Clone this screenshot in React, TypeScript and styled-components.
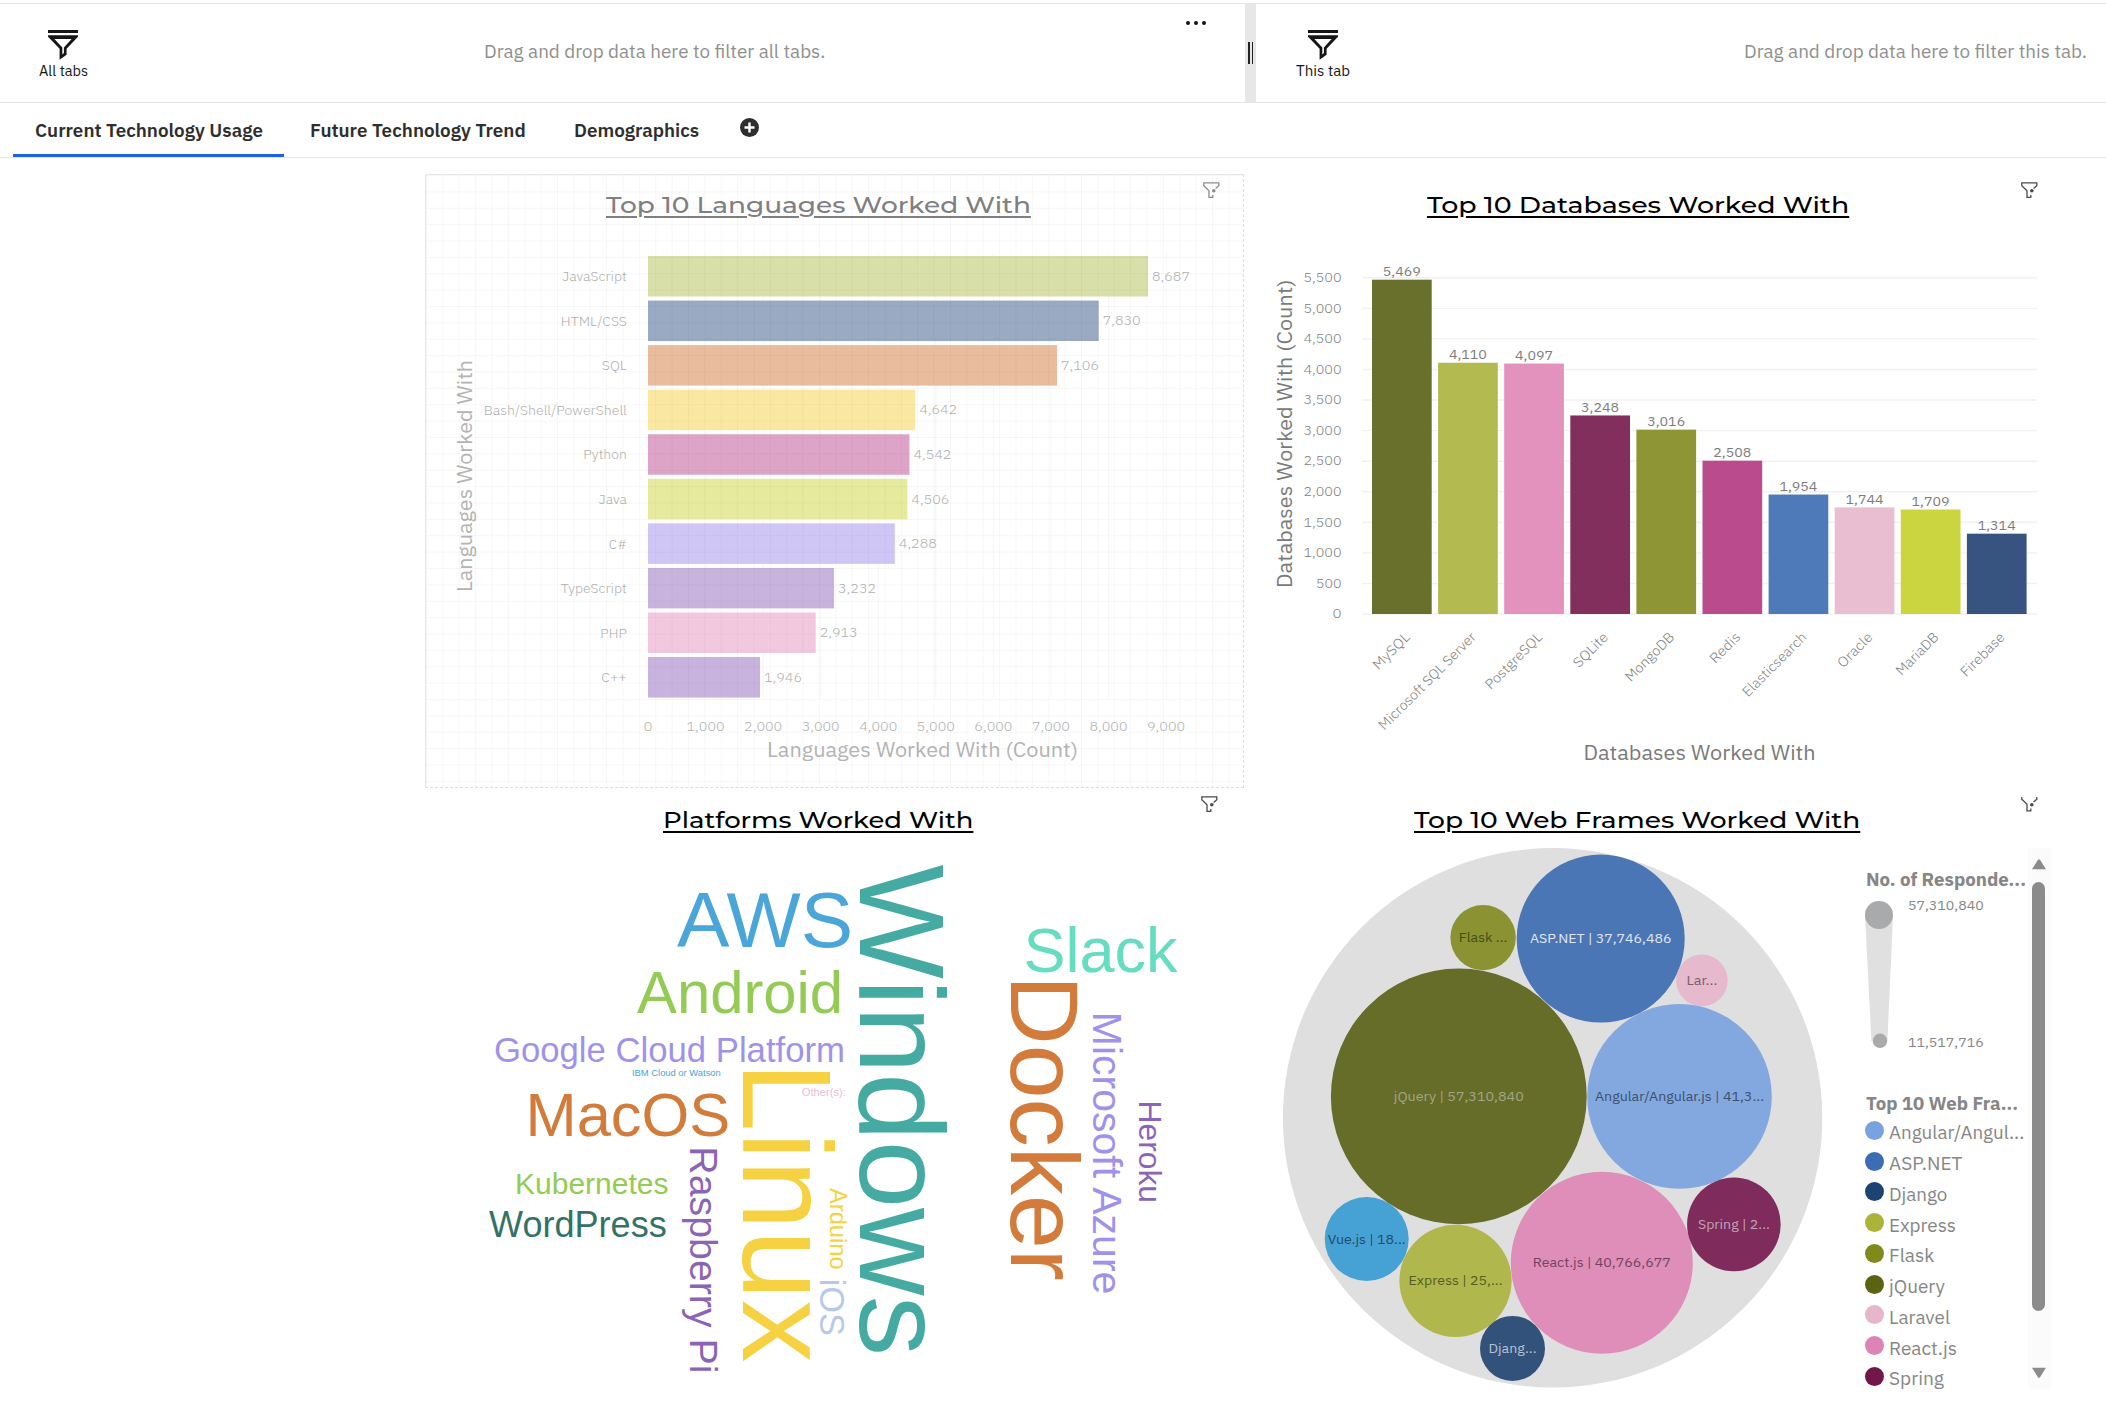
import React, { useLayoutEffect, useRef, useState } from 'react';
import styled, { createGlobalStyle } from 'styled-components';

const UI_FONT = '"IBM Plex Sans", "Open Sans", "Noto Sans", sans-serif';
const TITLE_FONT = 'Montserrat, Lato, "Open Sans", sans-serif';
const CLOUD_FONT = '"Liberation Sans", Arial, sans-serif';

const GlobalStyle = createGlobalStyle`
  *, *::before, *::after { box-sizing: border-box; }
  body { margin: 0; background: #fff; font-family: ${UI_FONT}; }
`;

/* ---------- Text that is scaled to a fixed measure ---------- */

const FitBox = styled.span<{ $w: number }>`
  display: inline-block;
  width: ${(p) => p.$w}px;
  white-space: nowrap;
  text-align: left;
`;

const FitInner = styled.span`
  display: inline-block;
  transform-origin: left center;
`;

function FitText({ width, children }: { width: number; children: string }) {
  const ref = useRef<HTMLSpanElement>(null);
  const [scale, setScale] = useState(1);
  useLayoutEffect(() => {
    if (ref.current) setScale(width / ref.current.offsetWidth);
  }, [width, children]);
  return (
    <FitBox $w={width}>
      <FitInner ref={ref} style={{ transform: `scaleX(${scale})` }}>{children}</FitInner>
    </FitBox>
  );
}

/* ---------- Page frame ---------- */

const Page = styled.div`
  display: flex;
  flex-direction: column;
  width: 2106px;
  height: 1416px;
  padding-top: 3px;
  overflow: hidden;
  background: #fff;
`;

const FilterBar = styled.div`
  display: flex;
  height: 100px;
  border-top: 1px solid #e4e4e4;
  border-bottom: 1px solid #e4e4e4;
`;

const FilterArea = styled.div<{ $w: number; $pad: number }>`
  display: flex;
  flex: none;
  width: ${(p) => p.$w}px;
  padding-left: ${(p) => p.$pad}px;
`;

const FilterScope = styled.div<{ $w: number }>`
  display: flex;
  flex-direction: column;
  align-items: center;
  width: ${(p) => p.$w}px;
  padding-top: 26px;
  color: #161616;
  font-size: 14px;
  line-height: 18px;
  svg { display: block; margin-bottom: 2px; }
`;

const DropHint = styled.div<{ $gap: number }>`
  margin-left: ${(p) => p.$gap}px;
  padding-top: 35px;
  color: #8f8f8f;
  font-size: 18.5px;
  line-height: 24px;
`;

const MoreButton = styled.div`
  display: flex;
  gap: 4px;
  margin: 17px 39px 0 auto;
  i { width: 4px; height: 4px; border-radius: 50%; background: #161616; }
`;

const Splitter = styled.div`
  display: flex;
  align-items: center;
  gap: 2px;
  flex: none;
  width: 11px;
  padding-left: 3px;
  background: #e7e7e7;
  i { width: 1.5px; height: 22px; background: #222; }
`;

const TabBar = styled.div`
  display: flex;
  height: 55px;
  padding-left: 13px;
  border-bottom: 1px solid #e4e4e4;
`;

const Tab = styled.div<{ $active?: boolean }>`
  height: 54px;
  padding: 15px 21.5px 0 21.5px;
  border-bottom: 3px solid ${(p) => (p.$active ? '#1f62e0' : 'transparent')};
  color: #2e2e2e;
  font-size: 18.5px;
  font-weight: 600;
  line-height: 24px;
  & + & { padding-left: 26px; }
`;

const AddTab = styled.div`
  padding: 15px 0 0 20px;
  svg { display: block; }
`;

const Canvas = styled.main`
  display: grid;
  grid-template-columns: 819px 819px;
  grid-template-rows: 614px 614px;
  padding: 16px 0 0 425px;
`;

/* ---------- Widgets ---------- */

const Widget = styled.section<{ $selected?: boolean }>`
  position: relative;
  display: flex;
  flex-direction: column;
  min-width: 0;
  ${(p) =>
    p.$selected &&
    `&::after {
      content: '';
      position: absolute;
      inset: 0;
      border: 1px solid #e6e6e6;
      border-right: 1px dashed #dcdcdc;
      border-bottom: 1px dashed #dcdcdc;
      background-image:
        linear-gradient(to right, rgba(0, 0, 0, 0.03) 1px, transparent 1px),
        linear-gradient(to bottom, rgba(0, 0, 0, 0.03) 1px, transparent 1px);
      background-size: 16.38px 16.38px;
    }`}
`;

const WidgetHead = styled.header<{ $right: number }>`
  display: flex;
  flex: none;
  height: 59px;
  padding: 8px ${(p) => p.$right}px 0 ${(p) => p.$right - 15}px;
`;

const Title = styled.h2<{ $faded?: boolean; $lower?: boolean }>`
  flex: 1;
  margin: ${(p) => (p.$lower ? '10px 2px 0 0' : '9px 0 0')};
  color: ${(p) => (p.$faded ? '#808080' : '#000')};
  font-family: ${TITLE_FONT};
  font-size: 23px;
  font-weight: 500;
  line-height: 28px;
  text-align: center;
  ${FitInner} {
    text-decoration: underline;
    text-decoration-thickness: 2px;
    text-underline-offset: 2.5px;
  }
`;

const ChartSvg = styled.svg`
  display: block;
  flex: none;
  font-family: ${UI_FONT};
`;

const WidgetBody = styled.div`
  display: flex;
  padding-top: 1px;
`;

function FunnelIcon() {
  return (
    <svg width="30" height="30" viewBox="0 0 30 30">
      <path d="M0 0h30v3H0z" fill="#161616" />
      <path
        fill="#161616"
        fillRule="evenodd"
        d="M0 5.3h30v1.5L18.6 18.8v6L11.6 29.8V18.8L0 6.8zM6.4 9l7.9 8.5v7l1.6-1.6v-5.4L23.6 9z"
      />
    </svg>
  );
}

function WidgetFilterIcon({ color, clipped }: { color: string; clipped?: boolean }) {
  return (
    <svg width="17" height="17" viewBox="0 0 17 17" fill="none" stroke={color} strokeWidth="1.3">
      <path
        d={
          clipped
            ? 'M.8 1v2.2l5.2 5v6.6h3.8v-2.2M12.6 6.1l3.2-2.9V1'
            : 'M12.6 6.6l3.2-2.9V.8H.8v2.9l5.2 5v6.6h3.8v-2.4'
        }
      />
      <circle cx="10.8" cy="8.8" r="1.8" fill={color} stroke="none" />
    </svg>
  );
}

/* Chart label stretched to an exact length. */
type LabelProps = React.SVGProps<SVGTextElement> & { len: number };

function Label({ len, ...rest }: LabelProps) {
  return <text textLength={len} lengthAdjust="spacingAndGlyphs" {...rest} />;
}

/* ---------- Languages: horizontal bars ---------- */

type Bar = { name: string; value: number; color: string; w: number };

const LANGUAGES: Bar[] = [
  { name: 'JavaScript', value: 8687, color: '#d9dfa8', w: 64.5 },
  { name: 'HTML/CSS', value: 7830, color: '#9aaac3', w: 66 },
  { name: 'SQL', value: 7106, color: '#e9bc9d', w: 25 },
  { name: 'Bash/Shell/PowerShell', value: 4642, color: '#fbe8a0', w: 143 },
  { name: 'Python', value: 4542, color: '#dea4c7', w: 43.5 },
  { name: 'Java', value: 4506, color: '#e6ea9f', w: 28 },
  { name: 'C#', value: 4288, color: '#cfc6f6', w: 18 },
  { name: 'TypeScript', value: 3232, color: '#c8b3de', w: 66 },
  { name: 'PHP', value: 2913, color: '#f2c8df', w: 26.5 },
  { name: 'C++', value: 1946, color: '#c8b3de', w: 25.5 },
];

const fmt = (n: number) => n.toLocaleString('en-US');
const numberWidth = (n: number) => (n === 0 ? 9 : n < 1000 ? 25.5 : 38);

function LanguagesChart() {
  const x0 = 648;
  const k = 0.05756;
  return (
    <ChartSvg width="819" height="555" viewBox="425 233 819 555">
      {[1, 2, 3, 4, 5, 6, 7, 8, 9].map((t) => (
        <line key={t} x1={x0 + t * 1000 * k} x2={x0 + t * 1000 * k} y1="254" y2="698" stroke="#f6f6f6" />
      ))}
      <g fontSize="13.9" fontWeight="300" fill="#b0b0b0">
        {LANGUAGES.map((b, i) => {
          const y = 256 + i * 44.56;
          const right = x0 + b.value * k;
          return (
            <g key={b.name}>
              <rect x={x0} y={y} width={b.value * k} height="40.5" fill={b.color} />
              <Label x={626.8 - b.w} y={y + 25.2} len={b.w}>{b.name}</Label>
              <Label x={right + 4} y={y + 24.8} len={38}>{fmt(b.value)}</Label>
            </g>
          );
        })}
        {[0, 1, 2, 3, 4, 5, 6, 7, 8, 9].map((t) => {
          const w = numberWidth(t * 1000);
          return (
            <Label key={t} x={x0 + t * 1000 * k - w / 2} y="731" len={w}>{fmt(t * 1000)}</Label>
          );
        })}
      </g>
      <g fontSize="21" fill="#b4b4b4">
        <Label x="767" y="757" len={311}>Languages Worked With (Count)</Label>
        <Label transform="translate(472 592) rotate(-90)" len={232}>Languages Worked With</Label>
      </g>
    </ChartSvg>
  );
}

/* ---------- Databases: columns ---------- */

const DATABASES: Bar[] = [
  { name: 'MySQL', value: 5469, color: '#69702b', w: 46 },
  { name: 'Microsoft SQL Server', value: 4110, color: '#b3ba50', w: 131 },
  { name: 'PostgreSQL', value: 4097, color: '#e292bd', w: 74 },
  { name: 'SQLite', value: 3248, color: '#822f5e', w: 43 },
  { name: 'MongoDB', value: 3016, color: '#8e9535', w: 63 },
  { name: 'Redis', value: 2508, color: '#ba4b8d', w: 37 },
  { name: 'Elasticsearch', value: 1954, color: '#4e7ab9', w: 84 },
  { name: 'Oracle', value: 1744, color: '#eabed1', w: 43 },
  { name: 'MariaDB', value: 1709, color: '#cbd540', w: 54 },
  { name: 'Firebase', value: 1314, color: '#36547f', w: 56 },
];

function DatabasesChart() {
  const y0 = 614;
  const k = 0.06113;
  const ticks = Array.from({ length: 12 }, (_, i) => i * 500);
  return (
    <ChartSvg width="819" height="555" viewBox="1244 233 819 555">
      {ticks.map((t) => (
        <line key={t} x1="1362" x2="2037" y1={y0 - t * k} y2={y0 - t * k} stroke="#f1f1f1" strokeWidth="1.4" />
      ))}
      <g fontSize="13.9" fontWeight="300" fill="#808080">
        {ticks.map((t) => {
          const w = numberWidth(t);
          return (
            <Label key={t} x={1341.5 - w} y={y0 - t * k + 4.3} len={w}>{fmt(t)}</Label>
          );
        })}
        {DATABASES.map((b, i) => (
          <Label
            key={b.name}
            transform={`translate(${1410.8 + i * 66.1} 638) rotate(-45)`}
            x={-b.w}
            len={b.w}
          >
            {b.name}
          </Label>
        ))}
      </g>
      <g fontSize="13.9" fill="#7c7c7c">
        {DATABASES.map((b, i) => {
          const x = 1372 + i * 66.1;
          const top = y0 - b.value * k;
          return (
            <g key={b.name}>
              <rect x={x} y={top} width="59.7" height={b.value * k} fill={b.color} />
              <Label x={x + 10.8} y={top - 3.8} len={38}>{fmt(b.value)}</Label>
            </g>
          );
        })}
      </g>
      <g fontSize="21" fill="#7a7a7a">
        <Label x="1583.5" y="760" len={232}>Databases Worked With</Label>
        <Label transform="translate(1292.3 588) rotate(-90)" len={308.5}>Databases Worked With (Count)</Label>
      </g>
    </ChartSvg>
  );
}

/* ---------- Platforms: word cloud ---------- */

type Word = { t: string; x: number; y: number; s: number; c: string; v?: boolean };

const WORDS: Word[] = [
  { t: 'AWS', x: 677, y: 947, s: 78.6, c: '#4aa5d9' },
  { t: 'Android', x: 637, y: 1013, s: 59.8, c: '#93cb54' },
  { t: 'Google Cloud Platform', x: 494, y: 1061.7, s: 34.7, c: '#9f92ea' },
  { t: 'IBM Cloud or Watson', x: 632, y: 1075.7, s: 9.4, c: '#4aa5d9' },
  { t: 'MacOS', x: 525.5, y: 1135.7, s: 61.4, c: '#d27b3a' },
  { t: 'Kubernetes', x: 515, y: 1193.6, s: 30, c: '#93cb54' },
  { t: 'WordPress', x: 489, y: 1236.7, s: 36.1, c: '#337267' },
  { t: 'Raspberry Pi', x: 690, y: 1146.3, s: 39.3, c: '#8c64b5', v: true },
  { t: 'Linux', x: 743, y: 1061.8, s: 125.8, c: '#f6d243', v: true },
  { t: 'Other(s):', x: 801.8, y: 1095.7, s: 11.2, c: '#eabdd3' },
  { t: 'Arduino', x: 829.7, y: 1188, s: 23.7, c: '#f6d243', v: true },
  { t: 'iOS', x: 820, y: 1278.7, s: 34.4, c: '#b6c9ea', v: true },
  { t: 'Windows', x: 860, y: 864.6, s: 121.2, c: '#45aba2', v: true },
  { t: 'Slack', x: 1023.5, y: 971.8, s: 63, c: '#66dcc0' },
  { t: 'Docker', x: 1011, y: 975, s: 96.6, c: '#d27b3a', v: true },
  { t: 'Microsoft Azure', x: 1093, y: 1011.8, s: 41, c: '#9f92ea', v: true },
  { t: 'Heroku', x: 1138.7, y: 1100.5, s: 31.8, c: '#8c64b5', v: true },
];

const CloudWord = styled.text`
  font-family: ${CLOUD_FONT};
`;

function PlatformsCloud() {
  return (
    <ChartSvg width="819" height="555" viewBox="425 847 819 555">
      {WORDS.map((w) => (
        <CloudWord
          key={w.t}
          fontSize={w.s}
          fill={w.c}
          transform={`translate(${w.x} ${w.y})${w.v ? ' rotate(90)' : ''}`}
        >
          {w.t}
        </CloudWord>
      ))}
    </ChartSvg>
  );
}

/* ---------- Web frames: packed bubbles ---------- */

const BUBBLES = [
  { t: 'ASP.NET | 37,746,486', x: 1600.7, y: 938.6, r: 84, c: '#4a76b6', f: '#e0e7f2', w: 141.5 },
  { t: 'Flask ...', x: 1483.1, y: 937.6, r: 32.7, c: '#8b9232', f: '#464c18', w: 48.5 },
  { t: 'Lar...', x: 1701.9, y: 980.4, r: 25.8, c: '#e6b9cd', f: '#75606a', w: 31 },
  { t: 'jQuery | 57,310,840', x: 1458.8, y: 1096.4, r: 127.9, c: '#666d28', f: '#a3a687', w: 130 },
  { t: 'Angular/Angular.js | 41,3...', x: 1679.5, y: 1096.4, r: 92.3, c: '#82a8df', f: '#3c506e', w: 169 },
  { t: 'React.js | 40,766,677', x: 1601.8, y: 1262.7, r: 91, c: '#df8eb9', f: '#704460', w: 138 },
  { t: 'Spring | 2...', x: 1733.9, y: 1224.4, r: 46.8, c: '#7f2b5b', f: '#c3a3b5', w: 72 },
  { t: 'Vue.js | 18...', x: 1366.7, y: 1239, r: 42, c: '#46a2d5', f: '#204d6a', w: 78 },
  { t: 'Express | 25,...', x: 1455.5, y: 1280.8, r: 56.1, c: '#b0b74c', f: '#585c26', w: 94 },
  { t: 'Djang...', x: 1512.5, y: 1348.4, r: 32.5, c: '#32517b', f: '#b8c4d4', w: 48 },
];

function BubbleChart() {
  return (
    <ChartSvg width="604" height="554" viewBox="1244 848 604 554">
      <circle cx="1552.6" cy="1117.8" r="269.7" fill="#dfdfdf" />
      <g fontSize="13.9">
        {BUBBLES.map((b) => (
          <g key={b.t}>
            <circle cx={b.x} cy={b.y} r={b.r} fill={b.c} />
            <Label x={b.x - b.w / 2} y={b.y + 4.5} len={b.w} fill={b.f}>{b.t}</Label>
          </g>
        ))}
      </g>
    </ChartSvg>
  );
}

const Legend = styled.aside`
  display: flex;
  flex-direction: column;
  width: 180px;
  height: 554px;
  padding: 20px 0 0 18px;
  color: #868686;
`;

const LegendTitle = styled.div`
  flex: none;
  height: 24px;
  font-size: 18px;
  font-weight: 700;
  line-height: 24px;
`;

const SizeScale = styled.div`
  display: flex;
  flex: none;
  height: 200px;
  gap: 15px;
  svg { display: block; flex: none; margin: 3px 0 0 -1px; }
`;

const SizeLabels = styled.div`
  display: flex;
  flex-direction: column;
  justify-content: space-between;
  height: 159px;
  padding-top: 4px;
  font-size: 13.8px;
  line-height: 18px;
`;

const LegendList = styled.div`
  padding-top: 1px;
`;

const LegendItem = styled.div`
  display: flex;
  flex: none;
  align-items: center;
  gap: 5px;
  height: 30.75px;
  font-size: 18.6px;
  line-height: 24px;
`;

const Dot = styled.i<{ $color: string }>`
  width: 19px;
  height: 19px;
  margin: -4px 0 0 -1px;
  border-radius: 50%;
  background: ${(p) => p.$color};
`;

const ScrollTrack = styled.div`
  display: flex;
  flex-direction: column;
  align-items: center;
  gap: 12px;
  width: 23px;
  height: 541px;
  padding: 11px 2px 11px 0;
  background: #fbfbfb;
  svg { display: block; }
`;

const ScrollThumb = styled.div`
  width: 13px;
  height: 429px;
  border-radius: 7px;
  background: #8b8b8b;
`;

const ScrollEnd = styled.div`
  margin-top: auto;
`;

const FRAMES: [string, string, number][] = [
  ['Angular/Angul...', '#78a3e0', 135.5],
  ['ASP.NET', '#3a6db3', 73.5],
  ['Django', '#1d4372', 58.5],
  ['Express', '#acb339', 67],
  ['Flask', '#808a1a', 45],
  ['jQuery', '#5b6212', 56],
  ['Laravel', '#e8b5cb', 61],
  ['React.js', '#de83b5', 67.5],
  ['Spring', '#711849', 54.5],
];

export default function App() {
  return (
    <Page>
      <GlobalStyle />
      <FilterBar>
        <FilterArea $w={1245} $pad={38}>
          <FilterScope $w={50}>
            <FunnelIcon />
            <FitText width={49}>All tabs</FitText>
          </FilterScope>
          <DropHint $gap={396}>
            <FitText width={341}>Drag and drop data here to filter all tabs.</FitText>
          </DropHint>
          <MoreButton><i /><i /><i /></MoreButton>
        </FilterArea>
        <Splitter><i /><i /></Splitter>
        <FilterArea $w={850} $pad={40}>
          <FilterScope $w={54}>
            <FunnelIcon />
            <FitText width={54}>This tab</FitText>
          </FilterScope>
          <DropHint $gap={394}>
            <FitText width={343}>Drag and drop data here to filter this tab.</FitText>
          </DropHint>
        </FilterArea>
      </FilterBar>
      <TabBar>
        <Tab $active><FitText width={228}>Current Technology Usage</FitText></Tab>
        <Tab><FitText width={216}>Future Technology Trend</FitText></Tab>
        <Tab><FitText width={125}>Demographics</FitText></Tab>
        <AddTab>
          <svg width="19" height="19" viewBox="0 0 19 19">
            <circle cx="9.5" cy="9.5" r="9.5" fill="#2e2e2e" />
            <path d="M9.5 4.5v10M4.5 9.5h10" stroke="#fff" strokeWidth="2.4" />
          </svg>
        </AddTab>
      </TabBar>
      <Canvas>
        <Widget $selected>
          <WidgetHead $right={24}>
            <Title $faded><FitText width={425}>Top 10 Languages Worked With</FitText></Title>
            <WidgetFilterIcon color="#8c8c8c" />
          </WidgetHead>
          <LanguagesChart />
        </Widget>
        <Widget>
          <WidgetHead $right={25}>
            <Title><FitText width={422}>Top 10 Databases Worked With</FitText></Title>
            <WidgetFilterIcon color="#4a4a4a" />
          </WidgetHead>
          <DatabasesChart />
        </Widget>
        <Widget>
          <WidgetHead $right={26}>
            <Title $lower><FitText width={310}>Platforms Worked With</FitText></Title>
            <WidgetFilterIcon color="#4a4a4a" />
          </WidgetHead>
          <PlatformsCloud />
        </Widget>
        <Widget>
          <WidgetHead $right={25}>
            <Title $lower><FitText width={446}>Top 10 Web Frames Worked With</FitText></Title>
            <WidgetFilterIcon color="#4a4a4a" clipped />
          </WidgetHead>
          <WidgetBody>
            <BubbleChart />
            <Legend>
              <LegendTitle><FitText width={160}>No. of Responde...</FitText></LegendTitle>
              <SizeScale>
                <svg width="28" height="157" viewBox="1865 895 28 157">
                  <path d="M1865 915h28l-5.6 126h-16z" fill="#e0e0e0" />
                  <circle cx="1879" cy="915" r="14" fill="#a8aaac" />
                  <circle cx="1880" cy="1040.8" r="7.2" fill="#a8aaac" />
                </svg>
                <SizeLabels>
                  <FitText width={76}>57,310,840</FitText>
                  <FitText width={76}>11,517,716</FitText>
                </SizeLabels>
              </SizeScale>
              <LegendTitle><FitText width={152}>Top 10 Web Fra...</FitText></LegendTitle>
              <LegendList>
                {FRAMES.map(([name, color, w]) => (
                  <LegendItem key={name}>
                    <Dot $color={color} />
                    <FitText width={w}>{name}</FitText>
                  </LegendItem>
                ))}
              </LegendList>
            </Legend>
            <ScrollTrack>
              <svg width="14" height="11" viewBox="0 0 14 11"><path d="M6 .8q1-1.2 2 0l6 9.4H0z" fill="#8b8b8b" /></svg>
              <ScrollThumb />
              <ScrollEnd>
                <svg width="14" height="11" viewBox="0 0 14 11"><path d="M6 10.2q1 1.2 2 0L14 .8H0z" fill="#8b8b8b" /></svg>
              </ScrollEnd>
            </ScrollTrack>
          </WidgetBody>
        </Widget>
      </Canvas>
    </Page>
  );
}
